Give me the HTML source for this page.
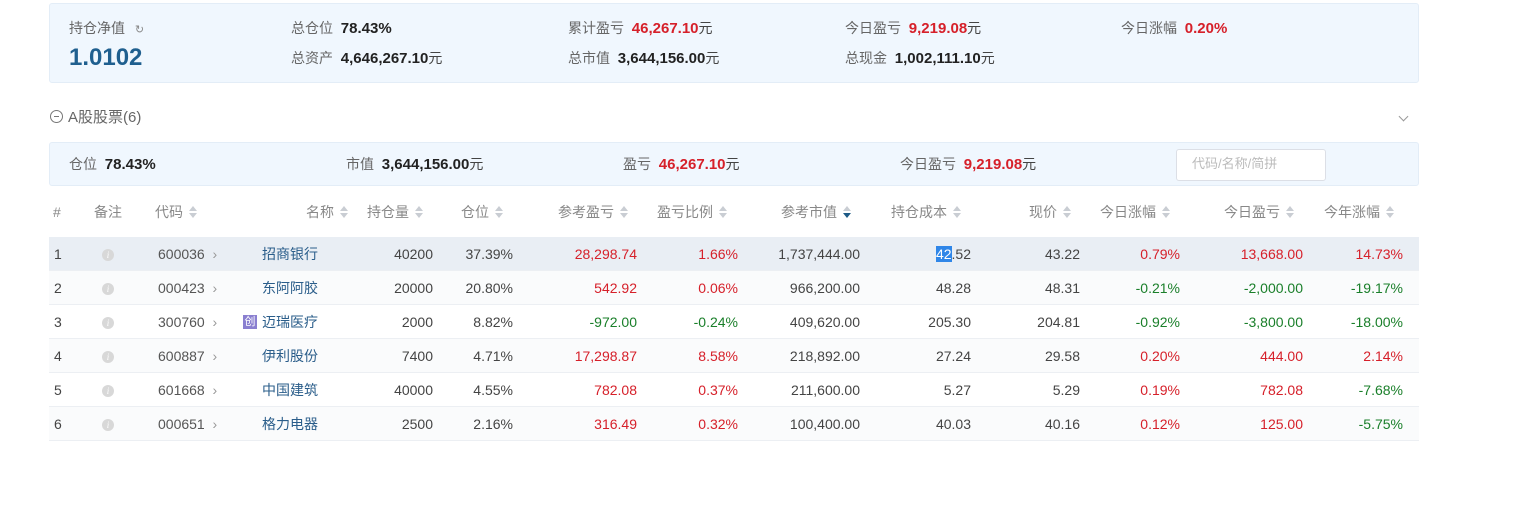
<!DOCTYPE html>
<html><head><meta charset="utf-8"><style>
*{margin:0;padding:0;box-sizing:border-box}
body{width:1519px;height:515px;background:#fff;font-family:"Liberation Sans","Noto Sans CJK SC",sans-serif;font-size:14px;color:#444;position:relative;overflow:hidden}
.a{position:absolute;white-space:nowrap;line-height:18px}
.r{text-align:right}
.lb{color:#666}
.b{font-weight:bold;color:#222;font-size:15px}
.red{color:#d6202a}
.grn{color:#1a7f2a}
.panel{position:absolute;left:49px;width:1370px;background:#f0f7fe;border:1px solid #e3edf7;border-radius:3px}
.row{position:absolute;left:49px;width:1370px;height:34px;border-bottom:1px solid #eceff3}
.hd{color:#888}
.s{display:inline-block;width:9px;height:12px;vertical-align:-1px;margin-left:6px;position:relative}
.s:before{content:"";position:absolute;left:0;top:0;border:4.5px solid transparent;border-bottom:5px solid #c9cdd3;border-top:0}
.s:after{content:"";position:absolute;left:0;top:7px;border:4.5px solid transparent;border-top:5px solid #c9cdd3;border-bottom:0}
.s.d:after{border-top-color:#1d5a86}
.nm{color:#2a5d8a}
.ic{position:absolute;left:102px;width:12px;height:12px;border-radius:50%;background:#d8d8d8;color:#fff;font-size:9px;line-height:12px;text-align:center;font-style:italic;font-family:"Liberation Serif",serif}
.cv{color:#999}
</style></head><body>
<div class="panel" style="top:3px;height:80px"></div>
<div class="a lb" style="left:69px;top:19px">持仓净值 <span style="font-size:11px;color:#888;margin-left:6px">↻</span></div>
<div class="a" style="left:69px;top:44px;font-size:24px;line-height:28px;font-weight:bold;color:#1f5f8f">1.0102</div>
<div class="a" style="left:291px;top:19px"><span class="lb">总仓位</span>&nbsp; <span class="b">78.43%</span></div>
<div class="a" style="left:291px;top:49px"><span class="lb">总资产</span>&nbsp; <span class="b">4,646,267.10</span>元</div>
<div class="a" style="left:568px;top:19px"><span class="lb">累计盈亏</span>&nbsp; <span class="b red">46,267.10</span>元</div>
<div class="a" style="left:568px;top:49px"><span class="lb">总市值</span>&nbsp; <span class="b">3,644,156.00</span>元</div>
<div class="a" style="left:845px;top:19px"><span class="lb">今日盈亏</span>&nbsp; <span class="b red">9,219.08</span>元</div>
<div class="a" style="left:845px;top:49px"><span class="lb">总现金</span>&nbsp; <span class="b">1,002,111.10</span>元</div>
<div class="a" style="left:1121px;top:19px"><span class="lb">今日涨幅</span>&nbsp; <span class="b red">0.20%</span></div>

<div class="a" style="left:50px;top:109px;font-size:15px;color:#666"><span style="display:inline-block;width:13px;height:13px;border:1px solid #777;border-radius:50%;vertical-align:-1px;position:relative;margin-right:5px"><span style="position:absolute;left:3px;top:5px;width:5px;height:1px;background:#777"></span></span>A股股票(6)</div>
<div style="position:absolute;left:1400px;top:113px;width:7px;height:7px;border-right:1px solid #999;border-bottom:1px solid #999;transform:rotate(45deg)"></div>

<div class="panel" style="top:142px;height:44px"></div>
<div class="a" style="left:69px;top:155px"><span class="lb">仓位</span>&nbsp; <span class="b">78.43%</span></div>
<div class="a" style="left:346px;top:155px"><span class="lb">市值</span>&nbsp; <span class="b">3,644,156.00</span>元</div>
<div class="a" style="left:623px;top:155px"><span class="lb">盈亏</span>&nbsp; <span class="b red">46,267.10</span>元</div>
<div class="a" style="left:900px;top:155px"><span class="lb">今日盈亏</span>&nbsp; <span class="b red">9,219.08</span>元</div>
<div style="position:absolute;left:1176px;top:149px;width:150px;height:32px;background:#fff;border:1px solid #dcdfe6;border-radius:3px"></div>
<div class="a" style="left:1192px;top:155px;color:#bbb;font-size:13px">代码/名称/简拼</div>

<div class="a hd" style="left:53px;top:203px">#</div>
<div class="a hd" style="left:94px;top:203px">备注</div>
<div class="a hd" style="left:155px;top:203px">代码<i class="s"></i></div>
<div class="a hd r" style="right:1170px;top:203px">名称<i class="s"></i></div>
<div class="a hd" style="left:367px;top:203px">持仓量<i class="s"></i></div>
<div class="a hd" style="left:461px;top:203px">仓位<i class="s"></i></div>
<div class="a hd" style="left:558px;top:203px">参考盈亏<i class="s"></i></div>
<div class="a hd" style="left:657px;top:203px">盈亏比例<i class="s"></i></div>
<div class="a hd" style="left:781px;top:203px">参考市值<i class="s d"></i></div>
<div class="a hd" style="left:891px;top:203px">持仓成本<i class="s"></i></div>
<div class="a hd" style="left:1029px;top:203px">现价<i class="s"></i></div>
<div class="a hd" style="left:1100px;top:203px">今日涨幅<i class="s"></i></div>
<div class="a hd" style="left:1224px;top:203px">今日盈亏<i class="s"></i></div>
<div class="a hd" style="left:1324px;top:203px">今年涨幅<i class="s"></i></div>

<div class="row" style="top:237px;background:#e9eef4"></div>
<div class="row" style="top:271px;background:#fafbfc"></div>
<div class="row" style="top:305px;background:#fff"></div>
<div class="row" style="top:339px;background:#fafbfc"></div>
<div class="row" style="top:373px;background:#fff"></div>
<div class="row" style="top:407px;background:#fafbfc"></div>

<div class="a" style="left:54px;top:245px">1</div><div class="ic" style="top:249px">i</div><div class="a" style="left:158px;top:245px;color:#555">600036 <span class="cv">&nbsp;›</span></div><div class="a nm" style="left:262px;top:245px">招商银行</div>
<div class="a r" style="right:1086px;top:245px">40200</div><div class="a r" style="right:1006px;top:245px">37.39%</div><div class="a r red" style="right:882px;top:245px">28,298.74</div><div class="a r red" style="right:781px;top:245px">1.66%</div><div class="a r" style="right:659px;top:245px">1,737,444.00</div><div class="a r" style="right:548px;top:245px"><span style="background:#2f86e8;color:#fff">42</span>.52</div><div class="a r" style="right:439px;top:245px">43.22</div><div class="a r red" style="right:339px;top:245px">0.79%</div><div class="a r red" style="right:216px;top:245px">13,668.00</div><div class="a r red" style="right:116px;top:245px">14.73%</div>

<div class="a" style="left:54px;top:279px">2</div><div class="ic" style="top:283px">i</div><div class="a" style="left:158px;top:279px;color:#555">000423 <span class="cv">&nbsp;›</span></div><div class="a nm" style="left:262px;top:279px">东阿阿胶</div>
<div class="a r" style="right:1086px;top:279px">20000</div><div class="a r" style="right:1006px;top:279px">20.80%</div><div class="a r red" style="right:882px;top:279px">542.92</div><div class="a r red" style="right:781px;top:279px">0.06%</div><div class="a r" style="right:659px;top:279px">966,200.00</div><div class="a r" style="right:548px;top:279px">48.28</div><div class="a r" style="right:439px;top:279px">48.31</div><div class="a r grn" style="right:339px;top:279px">-0.21%</div><div class="a r grn" style="right:216px;top:279px">-2,000.00</div><div class="a r grn" style="right:116px;top:279px">-19.17%</div>

<div class="a" style="left:54px;top:313px">3</div><div class="ic" style="top:317px">i</div><div class="a" style="left:158px;top:313px;color:#555">300760 <span class="cv">&nbsp;›</span></div><div class="a" style="left:243px;top:315px;width:14px;height:14px;background:#8a7fd0;color:#fff;font-size:11px;line-height:14px;text-align:center">创</div><div class="a nm" style="left:262px;top:313px">迈瑞医疗</div>
<div class="a r" style="right:1086px;top:313px">2000</div><div class="a r" style="right:1006px;top:313px">8.82%</div><div class="a r grn" style="right:882px;top:313px">-972.00</div><div class="a r grn" style="right:781px;top:313px">-0.24%</div><div class="a r" style="right:659px;top:313px">409,620.00</div><div class="a r" style="right:548px;top:313px">205.30</div><div class="a r" style="right:439px;top:313px">204.81</div><div class="a r grn" style="right:339px;top:313px">-0.92%</div><div class="a r grn" style="right:216px;top:313px">-3,800.00</div><div class="a r grn" style="right:116px;top:313px">-18.00%</div>

<div class="a" style="left:54px;top:347px">4</div><div class="ic" style="top:351px">i</div><div class="a" style="left:158px;top:347px;color:#555">600887 <span class="cv">&nbsp;›</span></div><div class="a nm" style="left:262px;top:347px">伊利股份</div>
<div class="a r" style="right:1086px;top:347px">7400</div><div class="a r" style="right:1006px;top:347px">4.71%</div><div class="a r red" style="right:882px;top:347px">17,298.87</div><div class="a r red" style="right:781px;top:347px">8.58%</div><div class="a r" style="right:659px;top:347px">218,892.00</div><div class="a r" style="right:548px;top:347px">27.24</div><div class="a r" style="right:439px;top:347px">29.58</div><div class="a r red" style="right:339px;top:347px">0.20%</div><div class="a r red" style="right:216px;top:347px">444.00</div><div class="a r red" style="right:116px;top:347px">2.14%</div>

<div class="a" style="left:54px;top:381px">5</div><div class="ic" style="top:385px">i</div><div class="a" style="left:158px;top:381px;color:#555">601668 <span class="cv">&nbsp;›</span></div><div class="a nm" style="left:262px;top:381px">中国建筑</div>
<div class="a r" style="right:1086px;top:381px">40000</div><div class="a r" style="right:1006px;top:381px">4.55%</div><div class="a r red" style="right:882px;top:381px">782.08</div><div class="a r red" style="right:781px;top:381px">0.37%</div><div class="a r" style="right:659px;top:381px">211,600.00</div><div class="a r" style="right:548px;top:381px">5.27</div><div class="a r" style="right:439px;top:381px">5.29</div><div class="a r red" style="right:339px;top:381px">0.19%</div><div class="a r red" style="right:216px;top:381px">782.08</div><div class="a r grn" style="right:116px;top:381px">-7.68%</div>

<div class="a" style="left:54px;top:415px">6</div><div class="ic" style="top:419px">i</div><div class="a" style="left:158px;top:415px;color:#555">000651 <span class="cv">&nbsp;›</span></div><div class="a nm" style="left:262px;top:415px">格力电器</div>
<div class="a r" style="right:1086px;top:415px">2500</div><div class="a r" style="right:1006px;top:415px">2.16%</div><div class="a r red" style="right:882px;top:415px">316.49</div><div class="a r red" style="right:781px;top:415px">0.32%</div><div class="a r" style="right:659px;top:415px">100,400.00</div><div class="a r" style="right:548px;top:415px">40.03</div><div class="a r" style="right:439px;top:415px">40.16</div><div class="a r red" style="right:339px;top:415px">0.12%</div><div class="a r red" style="right:216px;top:415px">125.00</div><div class="a r grn" style="right:116px;top:415px">-5.75%</div>
</body></html>
